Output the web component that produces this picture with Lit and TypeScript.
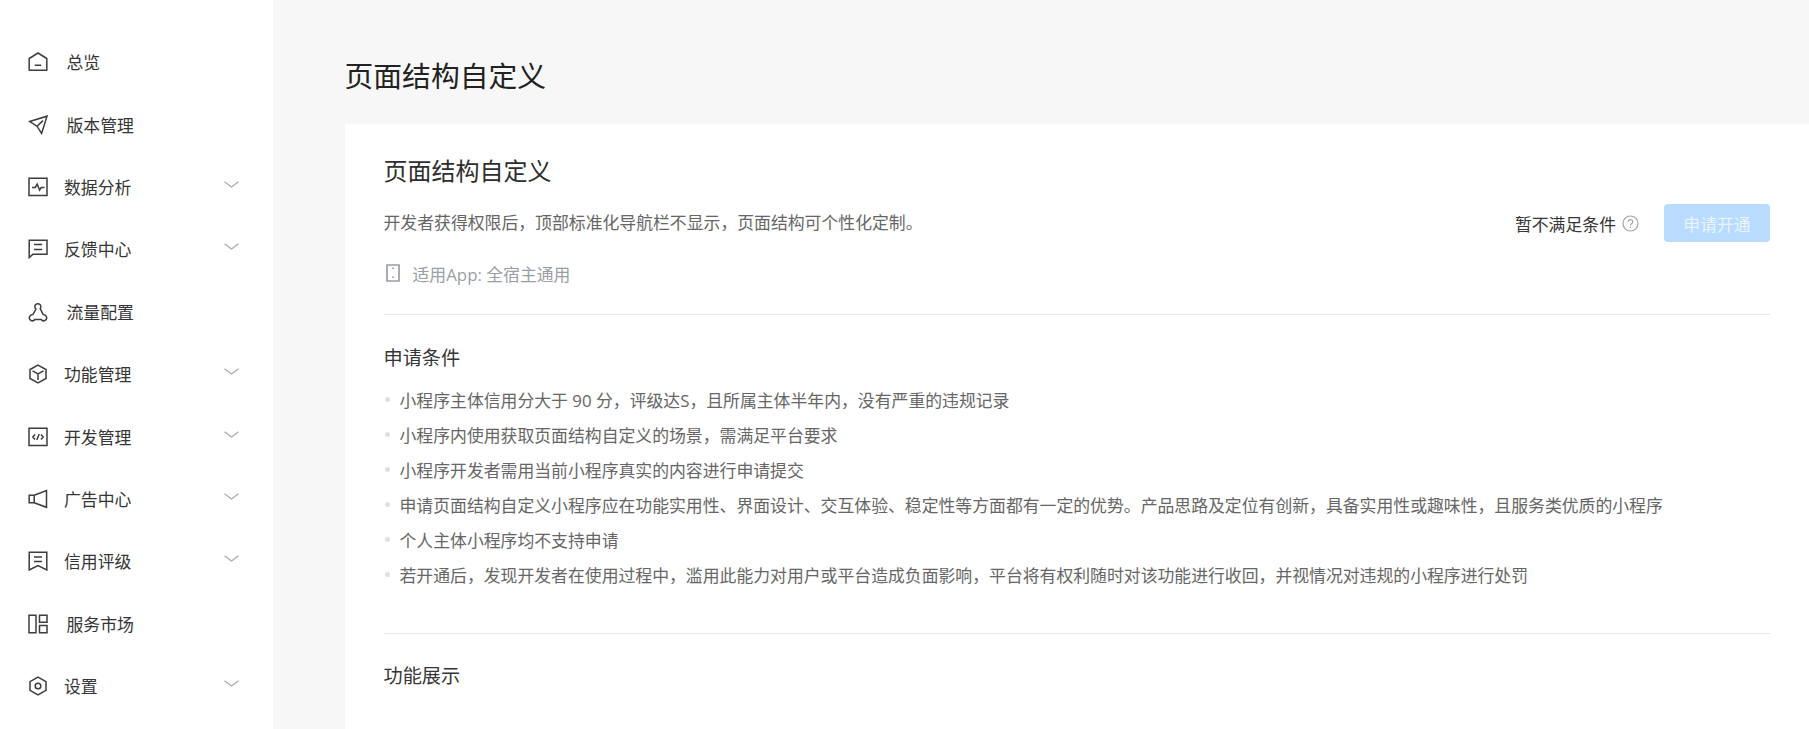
import { LitElement, html, css, svg } from "lit";
import { customElement } from "lit/decorators.js";

const S = (c: unknown) => html`<svg class="ic" viewBox="0 0 20 20" fill="none" stroke="#3d3d3d" stroke-width="1.5">${c}</svg>`;
const icons: Record<string, unknown> = {
  home: svg`<path d="M1.200 18.700V6.500L10 1l8.800 5.500v12.200"/><path d="M1 18.200h18M6.800 13.200h6.400"/>`,
  send: svg`<path d="M1.600 6.500 19 1.200 13.600 18.400 9 11.200ZM9 11.200 15 5.600"/>`,
  chart: svg`<path d="M1 18.500V1.200h18v17.300ZM4 10.500h3.200l2-3.400 2.400 6 1.600-2.600H16.500"/>`,
  chat: svg`<path d="M1.200 18.600V1.200h17.800v14H5Z"/><path d="M6 5.500h8.200M6 10.500h8.200"/>`,
  flow: svg`<path d="M4.700 12.800 8 7A3 3 0 1 1 12.200 6.500L15.300 12.800"/><path d="M4.700 12.800A3 3 0 1 0 6.800 17.500H13.200A3 3 0 1 0 15.300 12.800"/>`,
  box: svg`<path d="M10 1.200 18 5.500v9L10 18.800 2 14.500v-9ZM4.500 6.800 10 10l5.500-3.200M10 10v6"/>`,
  code: svg`<path d="M1 18.500V1.200h18v17.300ZM7 7.500 4.800 10 7 12.500M13 7.500l2.200 2.500L13 12.500M11.200 7 8.800 13"/>`,
  ad: svg`<path d="M1.200 6.200h5v7.500h-5ZM6.200 6.200 18.500 1.500v16.800L6.200 13.700"/>`,
  rank: svg`<path d="M1.200 19V1.200h17.600V19L10 14.600ZM6 6h8M6 10.500h8"/>`,
  grid: svg`<path d="M1 1.200h7v17.600H1ZM11.500 1.200h7.500v7h-7.500ZM11.500 11.500h7.500v7.300h-7.500Z"/>`,
  gear: svg`<path d="M10 1.200 18 5.600v8.800L10 18.800 2 14.400V5.600Z"/><circle cx="10" cy="10" r="2.800"/>`,
};
const nav: [string, string, boolean][] = [
  ["home", "总览", false], ["send", "版本管理", false], ["chart", "数据分析", true],
  ["chat", "反馈中心", true], ["flow", "流量配置", false], ["box", "功能管理", true],
  ["code", "开发管理", true], ["ad", "广告中心", true], ["rank", "信用评级", true],
  ["grid", "服务市场", false], ["gear", "设置", true],
];
const conditions = [
  "小程序主体信用分大于 90 分，评级达S，且所属主体半年内，没有严重的违规记录",
  "小程序内使用获取页面结构自定义的场景，需满足平台要求",
  "小程序开发者需用当前小程序真实的内容进行申请提交",
  "申请页面结构自定义小程序应在功能实用性、界面设计、交互体验、稳定性等方面都有一定的优势。产品思路及定位有创新，具备实用性或趣味性，且服务类优质的小程序",
  "个人主体小程序均不支持申请",
  "若开通后，发现开发者在使用过程中，滥用此能力对用户或平台造成负面影响，平台将有权利随时对该功能进行收回，并视情况对违规的小程序进行处罚",
];

@customElement("app-root")
export class AppRoot extends LitElement {
  static styles = css`
    :host { display: flex; width: 1809px; height: 729px; overflow: hidden; background: #f7f7f7;
      font-family: "Open Sans", "Noto Sans CJK SC", sans-serif; font-size: 16.85px; color: #353535; }
    .side { width: 273px; flex: none; background: #fff; padding-top: 31px; box-sizing: border-box; }
    .row { display: flex; align-items: center; height: 62.4px; padding-left: 28px; }
    .ic { width: 20px; height: 20px; flex: none; }
    .lab { margin: 2px 0 0 18.5px; flex: 1; line-height: 24px; }
    .row.sub .lab { margin-left: 16px; }
    .chev { width: 15px; height: 8px; margin: -4px 34px 0 0; flex: none; }
    .main { flex: 1; padding-left: 71.5px; min-width: 0; }
    h1 { margin: 0; font-weight: 400; font-size: 28.8px; line-height: 36px; color: #222; padding-top: 58px; height: 66px; }
    .card { background: #fff; height: 605px; padding: 27px 39px 0 39px; box-sizing: border-box; }
    h2 { margin: 0; font-weight: 400; font-size: 24px; line-height: 40px; color: #2e2e2e; }
    .intro { display: flex; align-items: center; justify-content: space-between; height: 38px; margin-top: 13px; }
    .desc { color: #666; margin-top: -3px; }
    .act { display: flex; align-items: center; }
    .q { width: 17px; height: 17px; margin: 0 25px 0 6px; }
    .btn { width: 106px; height: 38px; border-radius: 4px; background: #b8dbff; color: #eaf4ff; display: flex; align-items: center; justify-content: center; }
    .app { display: flex; align-items: center; height: 32px; margin-top: 15px; color: #9a9ea6; }
    .app svg { width: 14px; height: 18px; margin: 0 13px 0 2px; }
    .hr { height: 1px; background: #e8e8e8; margin-top: 25px; }
    h3 { margin: 0; font-weight: 400; font-size: 19.2px; line-height: 24px; color: #353535; }
    .s1 { margin-top: 31px; }
    ul { list-style: none; margin: 11.5px 0 0; padding: 0; }
    li { display: flex; align-items: center; height: 35px; color: #666; white-space: pre; }
    li::before { content: ""; width: 5px; height: 5px; border-radius: 50%; background: #e0e0e0; margin: 0 10px 0 1px; flex: none; }
    .hr2 { margin-top: 41px; }
    .s2 { margin-top: 30px; }
  `;
  render() {
    return html`
      <nav class="side">
        ${nav.map(([i, t, sub]) => html`<div class="row ${sub ? "sub" : ""}">
          ${S(icons[i])}
          <span class="lab">${t}</span>
          ${sub ? html`<svg class="chev" viewBox="0 0 15 8" fill="none" stroke="#aaa" stroke-width="1.2"><path d="M.5.8 7.5 6 14.5.8"/></svg>` : ""}
        </div>`)}
      </nav>
      <main class="main">
        <h1>页面结构自定义</h1>
        <section class="card">
          <h2>页面结构自定义</h2>
          <div class="intro">
            <span class="desc">开发者获得权限后，顶部标准化导航栏不显示，页面结构可个性化定制。</span>
            <div class="act">
              <span>暂不满足条件</span>
              <svg class="q" viewBox="0 0 17 17" fill="none" stroke="#a0a4aa" stroke-width="1.2"><circle cx="8.5" cy="8.5" r="7.5"/><path d="M6.300 6.800a2.200 2.200 0 1 1 3.400 1.800c-.8.5-1.200.9-1.200 1.800M8.500 11.800v1.200"/></svg>
              <div class="btn">申请开通</div>
            </div>
          </div>
          <div class="app">
            <svg viewBox="0 0 14 18" fill="none" stroke="#9a9ea6" stroke-width="1.7"><path d="M1 1h12v16H1ZM7 3.500v1.500M7 12.500V14"/></svg>
            <span>适用App: 全宿主通用</span>
          </div>
          <div class="hr"></div>
          <h3 class="s1">申请条件</h3>
          <ul>${conditions.map((c) => html`<li>${c}</li>`)}</ul>
          <div class="hr hr2"></div>
          <h3 class="s2">功能展示</h3>
        </section>
      </main>`;
  }
}
